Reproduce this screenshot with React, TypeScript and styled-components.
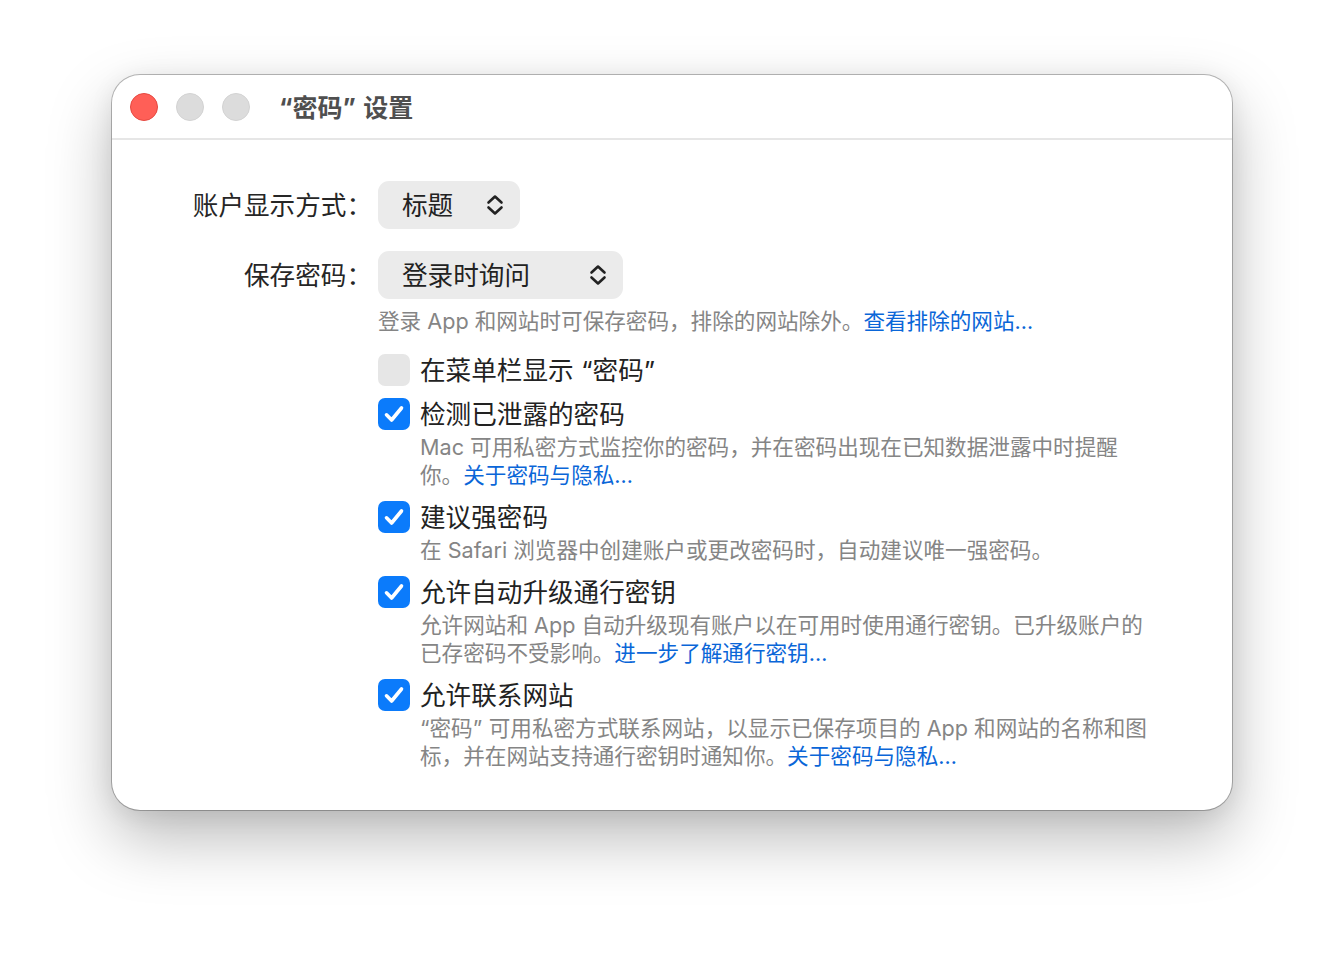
import React, { FC } from 'react';
import styled, { createGlobalStyle } from 'styled-components';

const GlobalStyle = createGlobalStyle`
  html, body {
    margin: 0;
    padding: 0;
    background: #ffffff;
  }
  body {
    font-family: Inter, 'Noto Sans CJK SC', sans-serif;
    -webkit-font-smoothing: antialiased;
  }
`;

const Page = styled.div`
  display: flex;
  align-items: flex-start;
  justify-content: center;
  width: 1344px;
  height: 958px;
  padding-top: 75px;
  box-sizing: border-box;
`;

const Window = styled.div`
  width: 1120px;
  background: #ffffff;
  border-radius: 28px;
  overflow: hidden;
  box-shadow: 0 0 0 1px rgba(0, 0, 0, 0.26), 0 28px 64px rgba(0, 0, 0, 0.27),
    0 4px 24px rgba(0, 0, 0, 0.08);
`;

const TitleBar = styled.div`
  display: flex;
  align-items: center;
  height: 63px;
  padding-left: 18px;
  border-bottom: 2px solid #e6e6e6;
`;

const Lights = styled.div`
  display: flex;
  gap: 18px;
`;

const Light = styled.span<{ $color: string; $edge: string }>`
  width: 28px;
  height: 28px;
  border-radius: 50%;
  box-sizing: border-box;
  background: ${({ $color }) => $color};
  border: 1px solid ${({ $edge }) => $edge};
`;

const Title = styled.h1`
  margin: 0 0 0 29px;
  padding-bottom: 2px;
  font-size: 25px;
  font-weight: 700;
  color: #4f4f4f;
`;

// curly quotes get a little air on their outer side, as the system font spaces them
const Mark = styled.span<{ $side: 'left' | 'right' }>`
  margin-${({ $side }) => $side}: 0.3em;
`;

const Quoted: FC<{ text: string; lead?: boolean }> = ({ text, lead }) => (
  <>
    {lead ? <Mark $side="left">“</Mark> : '“'}
    {text}
    <Mark $side="right">”</Mark>
  </>
);

const Form = styled.div`
  display: grid;
  grid-template-columns: 260px 1fr;
  column-gap: 6px;
  row-gap: 22px;
  padding: 41px 0 40px;
`;

const Label = styled.div`
  display: flex;
  align-items: center;
  justify-content: flex-end;
  box-sizing: border-box;
  height: 48px;
  padding-bottom: 4px;
  font-size: 25.6px;
  color: #262626;
`;

const Field = styled.div`
  display: flex;
  flex-direction: column;
  align-items: flex-start;
`;

const Popup = styled.div<{ $width: number }>`
  display: flex;
  align-items: center;
  justify-content: space-between;
  box-sizing: border-box;
  width: ${({ $width }) => $width}px;
  height: 48px;
  padding: 0 15px 3px 24px;
  border-radius: 11px;
  background: #ebebeb;
  font-size: 25.6px;
  color: #222222;

  svg {
    margin-top: 3px;
  }
`;

const Note = styled.p<{ $indent?: number }>`
  margin: ${({ $indent }) => ($indent ? `3px 0 0 ${$indent}px` : '8px 0 0')};
  font-size: 21.6px;
  line-height: 28px;
  color: #858585;
  white-space: nowrap;
`;

const Link = styled.a`
  color: #0a66d8;
  text-decoration: none;
`;

const Options = styled.div`
  grid-column: 2;
  display: flex;
  flex-direction: column;
  gap: 12px;
  margin-top: -3px;
`;

const Option = styled.div`
  display: flex;
  flex-direction: column;
`;

const OptionRow = styled.label`
  display: flex;
  align-items: center;
  gap: 10px;
  height: 32px;
  font-size: 25.6px;
  color: #222222;

  span + span {
    margin-top: -3px;
  }
`;

const Box = styled.span<{ $checked: boolean }>`
  display: flex;
  align-items: center;
  justify-content: center;
  width: 32px;
  height: 32px;
  border-radius: 7px;
  background: ${({ $checked }) => ($checked ? '#0b7bfb' : '#e6e6e6')};
`;

const UpDown: FC = () => (
  <svg width="20" height="24" viewBox="0 0 20 24" fill="none">
    <path
      d="M3.5 9.5 L10 3.5 L16.5 9.5 M3.5 14.5 L10 20.5 L16.5 14.5"
      stroke="#222"
      strokeWidth="2.6"
      strokeLinecap="round"
      strokeLinejoin="round"
    />
  </svg>
);

const Check: FC = () => (
  <svg width="32" height="32" viewBox="0 0 32 32" fill="none">
    <path
      d="M8.5 16.8 L13.6 22 L23.5 10"
      stroke="#fff"
      strokeWidth="3.6"
      strokeLinecap="round"
      strokeLinejoin="round"
    />
  </svg>
);

interface OptionItem {
  label: React.ReactNode;
  key: string;
  checked: boolean;
  lines?: React.ReactNode[];
}

const options: OptionItem[] = [
  {
    key: 'menubar',
    label: (
      <>
        在菜单栏显示<Quoted text="密码" lead />
      </>
    ),
    checked: false,
  },
  {
    key: 'leaks',
    label: '检测已泄露的密码',
    checked: true,
    lines: [
      'Mac 可用私密方式监控你的密码，并在密码出现在已知数据泄露中时提醒',
      <>
        你。<Link href="#">关于密码与隐私…</Link>
      </>,
    ],
  },
  {
    key: 'strong',
    label: '建议强密码',
    checked: true,
    lines: ['在 Safari 浏览器中创建账户或更改密码时，自动建议唯一强密码。'],
  },
  {
    key: 'passkeys',
    label: '允许自动升级通行密钥',
    checked: true,
    lines: [
      '允许网站和 App 自动升级现有账户以在可用时使用通行密钥。已升级账户的',
      <>
        已存密码不受影响。<Link href="#">进一步了解通行密钥…</Link>
      </>,
    ],
  },
  {
    key: 'contact',
    label: '允许联系网站',
    checked: true,
    lines: [
      <>
        <Quoted text="密码" />
        可用私密方式联系网站，以显示已保存项目的 App 和网站的名称和图
      </>,
      <>
        标，并在网站支持通行密钥时通知你。<Link href="#">关于密码与隐私…</Link>
      </>,
    ],
  },
];

const App: FC = () => {
  return (
    <>
      <GlobalStyle />
      <Page>
        <Window>
          <TitleBar>
            <Lights>
              <Light $color="#ff5f57" $edge="#e54840" />
              <Light $color="#dcdcdc" $edge="#d2d2d2" />
              <Light $color="#dcdcdc" $edge="#d2d2d2" />
            </Lights>
            <Title>
              <Quoted text="密码" />
              设置
            </Title>
          </TitleBar>
          <Form>
            <Label>账户显示方式：</Label>
            <Field>
              <Popup $width={142}>
                标题
                <UpDown />
              </Popup>
            </Field>
            <Label>保存密码：</Label>
            <Field>
              <Popup $width={245}>
                登录时询问
                <UpDown />
              </Popup>
              <Note>
                登录 App 和网站时可保存密码，排除的网站除外。
                <Link href="#">查看排除的网站…</Link>
              </Note>
            </Field>
            <Options>
              {options.map((opt) => (
                <Option key={opt.key}>
                  <OptionRow>
                    <Box $checked={opt.checked}>{opt.checked && <Check />}</Box>
                    <span>{opt.label}</span>
                  </OptionRow>
                  {opt.lines && (
                    <Note $indent={42}>
                      {opt.lines.map((line, i) => (
                        <React.Fragment key={i}>
                          {i > 0 && <br />}
                          {line}
                        </React.Fragment>
                      ))}
                    </Note>
                  )}
                </Option>
              ))}
            </Options>
          </Form>
        </Window>
      </Page>
    </>
  );
};

export default App;
